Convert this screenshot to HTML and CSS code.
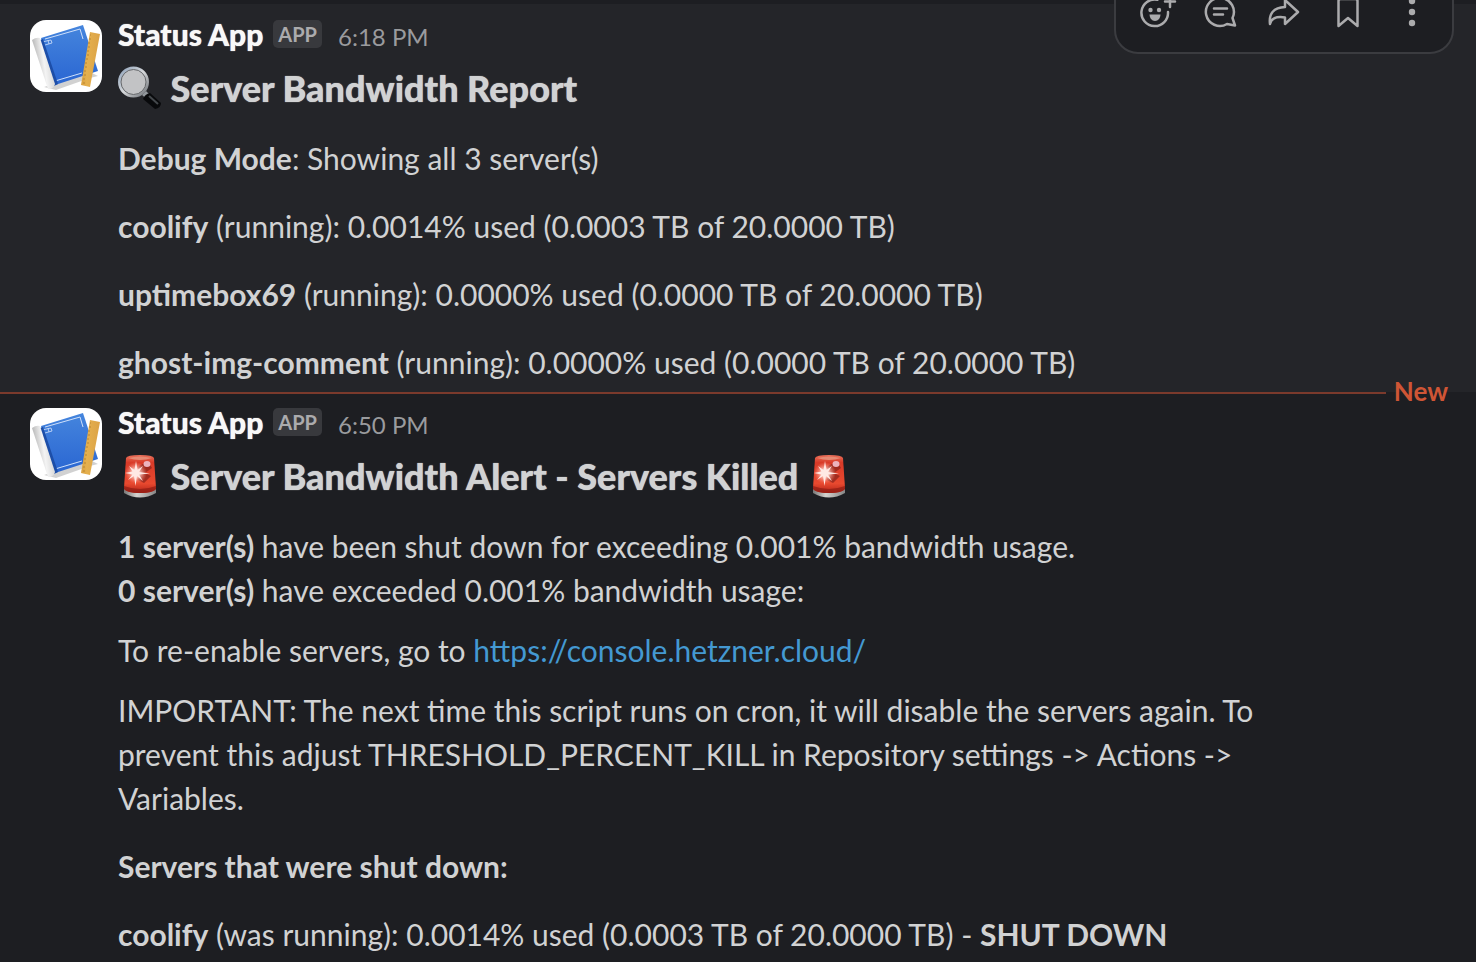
FILE: index.html
```html
<!DOCTYPE html>
<html lang="en">
<head>
<meta charset="utf-8">
<title>Status App</title>
<link rel="stylesheet" href="styles.css">
</head>
<body>
<svg class="defs" aria-hidden="true">
  <defs>
    <linearGradient id="blue" x1="0" y1="0" x2="0" y2="1"><stop offset="0" stop-color="#4585dd"/><stop offset="1" stop-color="#2a66d2"/></linearGradient>
    <linearGradient id="roll" x1="0" y1="0" x2="1" y2="-0.3"><stop offset="0" stop-color="#bbb"/><stop offset=".35" stop-color="#f4f4f4"/><stop offset="1" stop-color="#bdbdbd"/></linearGradient>
    <linearGradient id="rule" x1="0" y1="0" x2="1" y2="0"><stop offset="0" stop-color="#d9a03e"/><stop offset=".3" stop-color="#e5b04e"/><stop offset="1" stop-color="#dca346"/></linearGradient>
    <linearGradient id="dome" x1="0" y1="0" x2="0" y2="1"><stop offset="0" stop-color="#e9705a"/><stop offset=".2" stop-color="#d83a28"/><stop offset=".75" stop-color="#e8492f"/><stop offset="1" stop-color="#b32418"/></linearGradient>
    <linearGradient id="base" x1="0" y1="0" x2="1" y2="0"><stop offset="0" stop-color="#777"/><stop offset=".4" stop-color="#d4d2cf"/><stop offset="1" stop-color="#858585"/></linearGradient>
    <radialGradient id="glow"><stop offset="0" stop-color="#fff"/><stop offset=".35" stop-color="#ffd9d2" stop-opacity=".85"/><stop offset="1" stop-color="#ff8a78" stop-opacity="0"/></radialGradient>
    <linearGradient id="rim" x1="0" y1="0" x2="1" y2="1"><stop offset="0" stop-color="#8fa3bb"/><stop offset=".5" stop-color="#d6d8da"/><stop offset="1" stop-color="#6b6f75"/></linearGradient>
    <symbol id="app" viewBox="0 0 72 72">
      <rect width="72" height="72" fill="#fff"/>
      <path d="M14 67 26 70 60 58 68 56 60 52Z" fill="#000" opacity=".18"/>
      <path d="M11 18 53 5 68 51 25 65Z" fill="url(#blue)"/>
      <path d="M15 19 50 9 53 19M25 61 52 53" fill="none" stroke="#cfe0fa" stroke-width="1"/>
      <path d="M12 22 21 20 22 23 15 25M18 20 19 24" fill="none" stroke="#cfe0fa" stroke-width=".8"/>
      <path d="M10 20 13 19 28 64 24 66Z" fill="#1d4ea8"/>
      <path d="M2 20Q6 17 10 18L25 64Q24 69 18 69Z" fill="url(#roll)"/>
      <path d="M60 12 70 14 60 67 51 65Z" fill="url(#rule)"/>
      <path d="M60 15h1m-2 4h2m-3 4h2m-2 4h2m-3 4h2m-2 4h2m-3 4h2m-3 4h2m-2 4h2m-3 4h2m-2 4h2m-3 4h2m-2 4h2" stroke="#b98632" stroke-width="1"/>
    </symbol>
    <symbol id="siren" viewBox="0 0 44 44">
      <path d="M6 35Q22 42 38 35V39Q22 48 6 39Z" fill="url(#base)"/>
      <path d="M8 4Q9 1 22 1T36 4L38 34Q37 39 22 39T6 34Z" fill="url(#dome)"/>
      <path d="M10 4Q22 1 34 4 28 6 22 6T10 4Z" fill="#e58a74"/>
      <path d="M20 13Q30 5 34 14L27 19 33 22 26 29 20 26Z" fill="#7f2119" opacity=".65"/>
      <ellipse cx="29" cy="10" rx="3.500" ry="3" fill="#ecb3bd"/>
      <path d="M6 32Q22 38 38 32V35Q35 39 22 39T6 35Z" fill="#8e1d14" opacity=".7"/>
      <circle cx="18" cy="19" r="11" fill="url(#glow)"/>
      <path d="M18 7 19.500 16 25 12 21 18 32 19.500 21 20.500 25 27 19 22 17.500 32 16 22 10 26 14.500 20.500 7 19 14.500 17.500 11 12 16.500 16Z" fill="#ffe9e4"/>
    </symbol>
    <symbol id="lens" viewBox="0 0 44 44">
      <path d="M24 29 28 25 34 31 30 34Z" fill="#92979c"/>
      <path d="M25 33Q27 28 32 27L43 37Q43 42 37 43Z" fill="#08090b"/>
      <path d="M31 30 40 38" stroke="#44484c" stroke-width="2"/>
      <circle cx="15.500" cy="16" r="14" fill="#c2c3c5" stroke="url(#rim)" stroke-width="3"/>
      <circle cx="15.500" cy="16" r="12.500" fill="none" stroke="#66686b" stroke-width="1"/>
    </symbol>
  </defs>
</svg>

<main class="feed">
  <article class="message message-hover">
    <svg class="avatar" role="img" aria-label="Status App"><use href="#app"/></svg>
    <div class="content">
      <header class="meta"><span class="name">Status App</span><span class="badge">APP</span><time class="time">6:18 PM</time></header>
      <h2 class="title"><svg class="emoji" aria-hidden="true"><use href="#lens"/></svg> Server Bandwidth Report</h2>
      <p class="section"><b>Debug Mode</b>: Showing all 3 server(s)</p>
      <p class="section"><b>coolify</b> (running): 0.0014% used (0.0003 TB of 20.0000 TB)</p>
      <p class="section"><b>uptimebox69</b> (running): 0.0000% used (0.0000 TB of 20.0000 TB)</p>
      <p class="section"><b>ghost-img-comment</b> (running): 0.0000% used (0.0000 TB of 20.0000 TB)</p>
    </div>
    <div class="actions">
      <button class="action" aria-label="Add reaction"><svg viewBox="0 0 36 36"><path d="M19.500 3.800A13.300 13.300 0 1 0 30 16M27 5.500h10M32 0v11"/><circle class="dot" cx="12.500" cy="14" r="2.200"/><circle class="dot" cx="21" cy="14" r="2.200"/><path class="dot" d="M11.500 18.500h11Q22 25 17 25T11.500 18.500Z"/></svg></button>
      <button class="action" aria-label="Reply in thread"><svg viewBox="0 0 36 36"><path d="M33 29.500 30.500 22A14 14 0 1 0 25 28ZM12 12.500h13M12 18.500h9"/></svg></button>
      <button class="action" aria-label="Forward"><svg viewBox="0 0 36 36"><path d="M19 4 32 16 19 28V21.500Q6 19.500 4 28 2 12 19 11Z"/></svg></button>
      <button class="action" aria-label="Save for later"><svg viewBox="0 0 36 36"><path d="M8.500 5Q8.500 3 10.500 3H25.500Q27.500 3 27.500 5V30L18 22 8.500 30Z"/></svg></button>
      <button class="action" aria-label="More actions"><svg viewBox="0 0 36 36"><circle class="dot" cx="18" cy="5" r="3.200"/><circle class="dot" cx="18" cy="16" r="3.200"/><circle class="dot" cx="18" cy="27" r="3.200"/></svg></button>
    </div>
  </article>

  <div class="divider" role="separator"><span class="divider-label">New</span></div>

  <article class="message">
    <svg class="avatar" role="img" aria-label="Status App"><use href="#app"/></svg>
    <div class="content">
      <header class="meta"><span class="name">Status App</span><span class="badge">APP</span><time class="time">6:50 PM</time></header>
      <h2 class="title"><svg class="emoji" aria-hidden="true"><use href="#siren"/></svg> Server Bandwidth Alert - Servers Killed <svg class="emoji" aria-hidden="true"><use href="#siren"/></svg></h2>
      <div class="section">
        <p><b>1 server(s)</b> have been shut down for exceeding 0.001% bandwidth usage.<br><b>0 server(s)</b> have exceeded 0.001% bandwidth usage:</p>
        <p>To re-enable servers, go to <a href="https://console.hetzner.cloud/">https://console.hetzner.cloud/</a></p>
        <p>IMPORTANT: The next time this script runs on cron, it will disable the servers again. To prevent this adjust THRESHOLD_PERCENT_KILL in Repository settings -&gt; Actions -&gt; Variables.</p>
      </div>
      <p class="section"><b>Servers that were shut down:</b></p>
      <p class="section"><b>coolify</b> (was running): 0.0014% used (0.0003 TB of 20.0000 TB) - <b>SHUT DOWN</b></p>
    </div>
  </article>
</main>
</body>
</html>
```
FILE: styles.css
```css
* { box-sizing: border-box; }

body {
  margin: 0;
  background: #1d1e22;
  color: #d1d2d3;
  font: 30px/44px Lato, sans-serif;
  overflow: hidden;
}

p, h2 { margin: 0; }
a { color: #4499d2; text-decoration: none; }
b { font-weight: 700; }

.defs { position: absolute; width: 0; height: 0; }

.feed { padding-top: 4px; }

.message {
  position: relative;
  display: flex;
  gap: 16px;
  padding: 8px 130px 8px 30px;
}

.message-hover { background: #242529; }

.avatar {
  flex: none;
  width: 72px;
  height: 72px;
  margin-top: 8px;
  border-radius: 16px;
}

.content { flex: 1; min-width: 0; }

.meta { display: flex; align-items: baseline; height: 44px; }

.name {
  color: #f8f8f8;
  font-weight: 900;
  text-shadow: 0 0 1px currentColor;
}

.badge {
  align-self: flex-start;
  margin: 8px 16px 0 10px;
  padding: 0 5px;
  border-radius: 5px;
  background: #38393d;
  color: #ababad;
  font-size: 20px;
  font-weight: 700;
  line-height: 28px;
}

.time { color: #9a9b9e; font-size: 24px; }

.title {
  margin: 4px 0 20px;
  font-size: 36px;
  font-weight: 900;
  line-height: 56px;
  text-shadow: 0 0 1px currentColor;
}

.emoji {
  width: 44px;
  height: 44px;
  vertical-align: -8px;
}

.section + .section { margin-top: 24px; }
.section > p + p { margin-top: 16px; }

.actions {
  position: absolute;
  top: -30px;
  right: 22px;
  display: flex;
  align-items: flex-end;
  gap: 4px;
  height: 80px;
  padding: 0 10px 8px;
  border: 2px solid #3b3c40;
  border-radius: 24px;
  background: #1d1e22;
}

.action {
  width: 60px;
  height: 60px;
  padding: 0;
  border: 0;
  background: none;
}

.action svg {
  display: block;
  width: 36px;
  height: 36px;
  margin: 6px auto;
  overflow: visible;
  fill: none;
  stroke: #ababad;
  stroke-width: 2.5;
  stroke-linecap: round;
  stroke-linejoin: round;
}

.action .dot { fill: #ababad; stroke: none; }

.divider {
  display: flex;
  align-items: center;
  height: 2px;
  margin-bottom: -2px;
  padding-right: 28px;
}

.divider::before {
  content: "";
  flex: 1;
  height: 2px;
  margin-right: 8px;
  background: #7b3a2c;
}

.divider-label {
  position: relative;
  padding-bottom: 4px;
  color: #cf5535;
  font-size: 26px;
  font-weight: 700;
}
```
